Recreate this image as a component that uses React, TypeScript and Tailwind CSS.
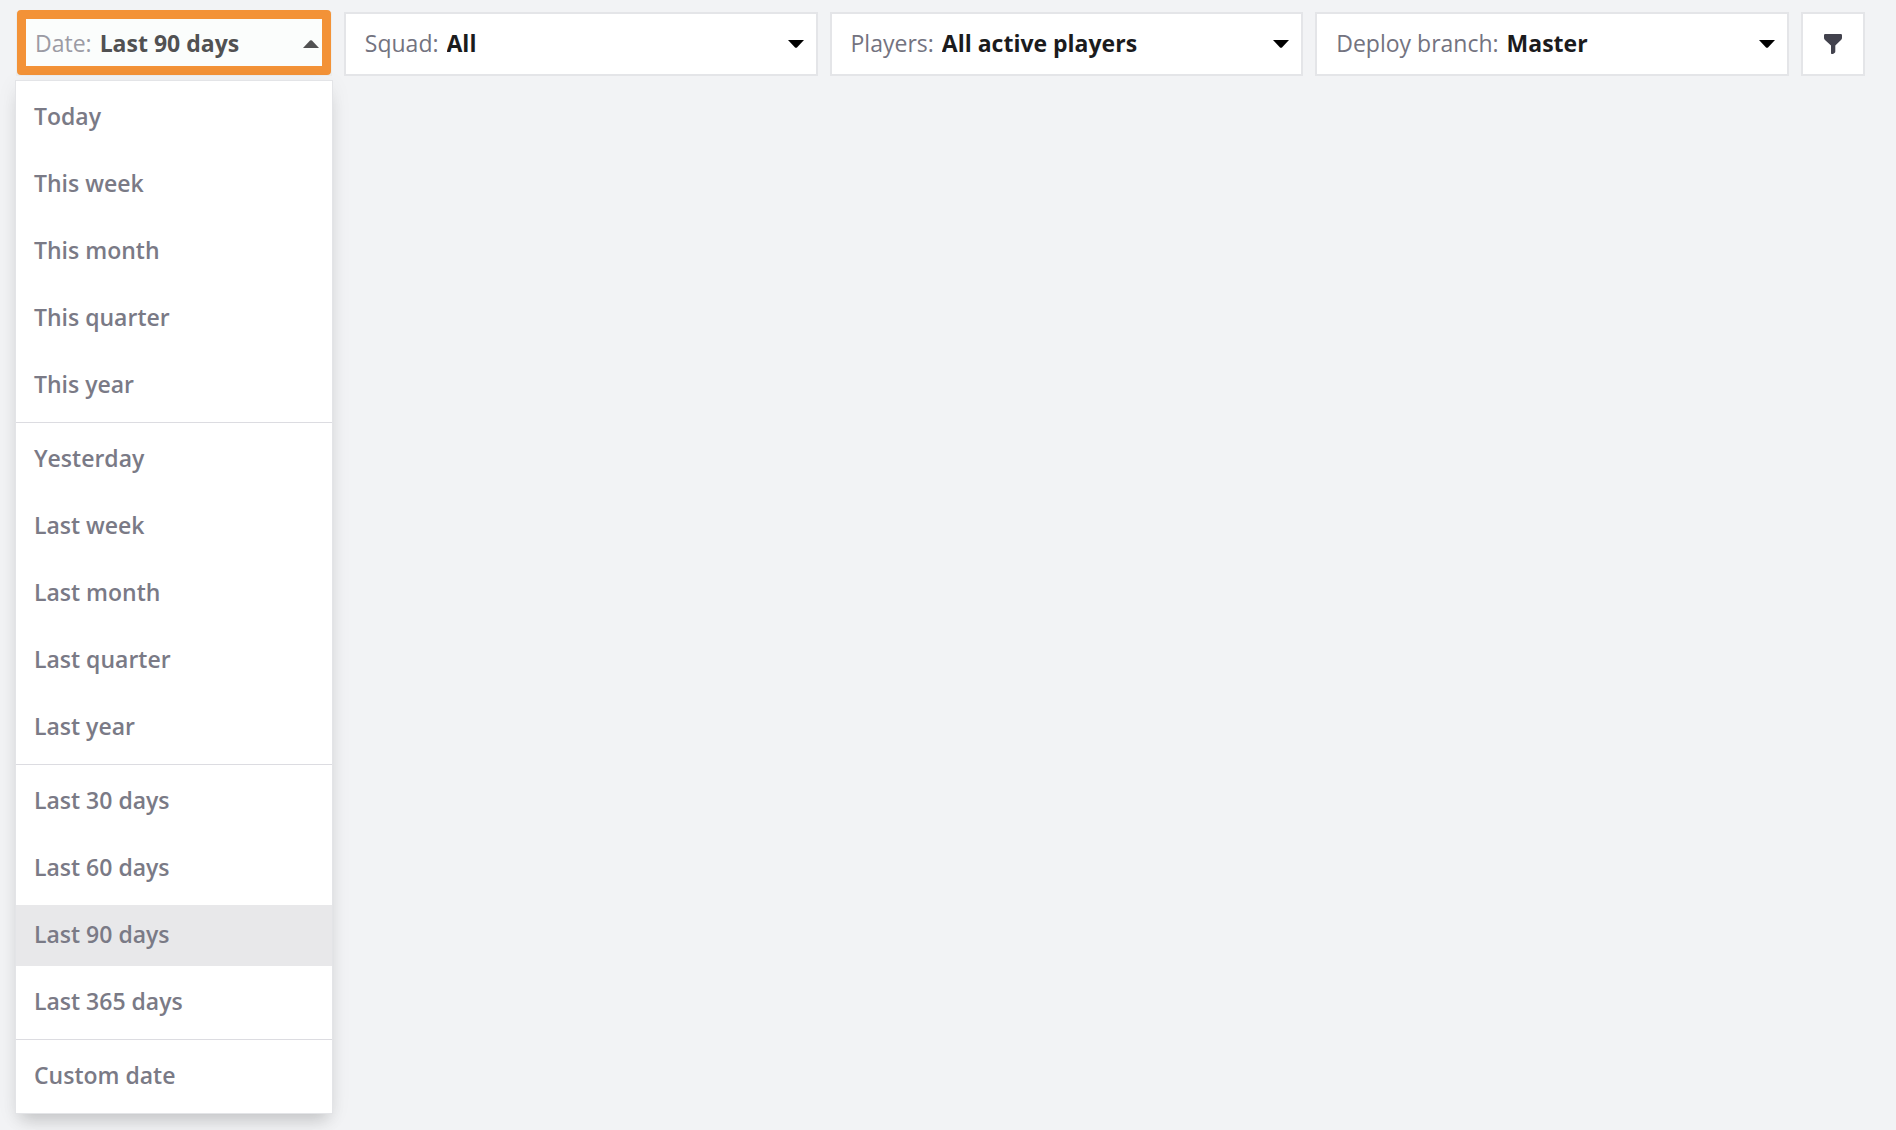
import React, { useState } from "react";

const DATE_GROUPS = [
  ["Today", "This week", "This month", "This quarter", "This year"],
  ["Yesterday", "Last week", "Last month", "Last quarter", "Last year"],
  ["Last 30 days", "Last 60 days", "Last 90 days", "Last 365 days"],
  ["Custom date"],
];

const FILTERS = [
  { id: "squad", label: "Squad:", options: ["All"] },
  { id: "players", label: "Players:", options: ["All active players"] },
  { id: "branch", label: "Deploy branch:", options: ["Master"] },
];

function Caret({ up = false }: { up?: boolean }) {
  return (
    <svg viewBox="0 0 16 8" aria-hidden="true" className="pointer-events-none h-2 w-4 shrink-0" fill="currentColor">
      {up ? <path d="M0 8 L7 .6 Q8 -.2 9 .6 L16 8Z" /> : <path d="M0 0 H16 L9 7.4 Q8 8.2 7 7.4Z" />}
    </svg>
  );
}

function FilterSelect({ id, label, options }: { id: string; label: string; options: string[] }) {
  return (
    <div className="flex h-16 items-center border-2 border-[#e4e5e8] bg-white pr-3 pl-[19px] text-[23px]">
      <label htmlFor={id} className="shrink-0 pb-0.5 font-medium text-[#737380]">{label}</label>
      <select id={id} className="h-full min-w-0 flex-1 appearance-none bg-transparent pb-0.5 pl-2 font-bold text-[#1b1b1d] outline-none">
        {options.map((o) => (
          <option key={o}>{o}</option>
        ))}
      </select>
      <Caret />
    </div>
  );
}

function DateFilter() {
  const [open, setOpen] = useState(true);
  const [selected, setSelected] = useState("Last 90 days");

  return (
    <div className="relative">
      <button type="button" aria-haspopup="listbox" aria-expanded={open} onClick={() => setOpen(!open)} className="flex h-16 w-full items-center border-2 border-[#eceded] bg-[#fbfdfc] pr-[11px] pl-[17px] text-left text-[23px] text-[#515152]">
        <span className="pb-0.5 font-medium text-[#9b9ba4]">Date:</span>
        <span className="flex-1 pb-0.5 pl-2 font-bold">{selected}</span>
        <Caret up={open} />
      </button>
      <span className="pointer-events-none absolute inset-x-px -top-0.5 bottom-px rounded border-9 border-[#f39237]" />
      {open && (
        <div role="listbox" aria-label="Date" className="absolute top-full -inset-x-px mt-1 divide-y divide-[#dcdce1] border border-[#e3e4e7] bg-white shadow-[0_12px_16px_-6px_rgba(0,0,0,0.16),0_4px_20px_rgba(0,0,0,0.06)]">
          {DATE_GROUPS.map((group) => (
            <div key={group[0]} role="group" className="flex flex-col gap-1.5 py-1.5">
              {group.map((name) => (
                <button key={name} type="button" role="option" aria-selected={name === selected} onClick={() => setSelected(name)} className="h-[61px] px-[18px] pb-0.5 text-left text-[23px] font-semibold text-[#7a7a86] hover:bg-gray-100 aria-selected:bg-[#e8e8ea]">
                  {name}
                </button>
              ))}
            </div>
          ))}
        </div>
      )}
    </div>
  );
}

export default function App() {
  return (
    <main className="min-h-screen bg-[#f2f3f5] pt-3 pr-[31px] pl-4 font-['Open_Sans',sans-serif]">
      <div className="grid grid-cols-[2fr_3fr_3fr_3fr_64px] gap-3">
        <DateFilter />
        {FILTERS.map((f) => (
          <FilterSelect key={f.id} {...f} />
        ))}
        <button type="button" aria-label="More filters" className="flex h-16 items-center justify-center border-2 border-[#e4e5e8] bg-white text-[#42424d]">
          <svg viewBox="0 0 18 20" aria-hidden="true" className="h-5 w-[18px]" fill="currentColor">
            <path d="M1.2 0H16.8Q18 0 18 1.2V4Q18 5 17 6L11.3 11.5V17.6Q11.3 18.3 10.8 18.7L9 20Q7 20.6 7 19V11.5L1 6Q0 5 0 4V1.2Q0 0 1.2 0Z" />
          </svg>
        </button>
      </div>
    </main>
  );
}
